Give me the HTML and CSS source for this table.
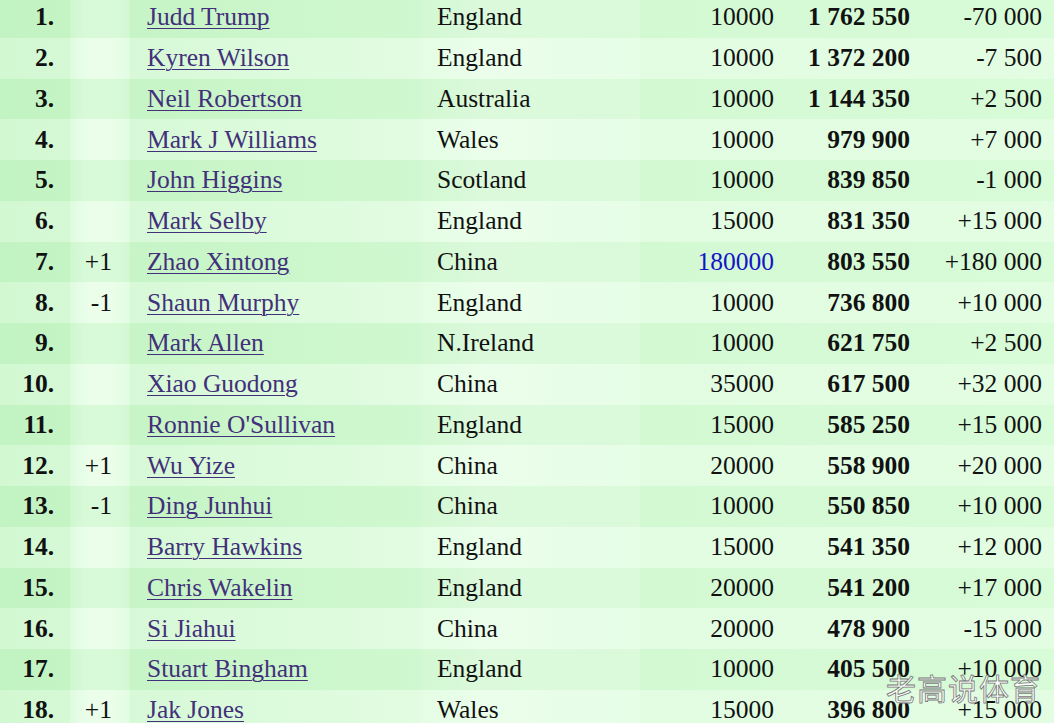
FILE: index.html
```html
<!DOCTYPE html>
<html>
<head>
<meta charset="utf-8">
<link rel="stylesheet" href="styles.css">
</head>
<body>
<div class="page">
<table class="rank">
<colgroup><col class="c-pos"><col class="c-chg"><col class="c-name"><col class="c-ctry"><col class="c-pts"><col class="c-tot"><col class="c-diff"></colgroup>
<tbody>
<tr class="odd"><td class="pos">1.</td><td class="chg"></td><td class="name"><a href="#">Judd Trump</a></td><td class="ctry">England</td><td class="pts">10000</td><td class="tot">1 762 550</td><td class="diff">-70 000</td></tr>
<tr class="even"><td class="pos">2.</td><td class="chg"></td><td class="name"><a href="#">Kyren Wilson</a></td><td class="ctry">England</td><td class="pts">10000</td><td class="tot">1 372 200</td><td class="diff">-7 500</td></tr>
<tr class="odd"><td class="pos">3.</td><td class="chg"></td><td class="name"><a href="#">Neil Robertson</a></td><td class="ctry">Australia</td><td class="pts">10000</td><td class="tot">1 144 350</td><td class="diff">+2 500</td></tr>
<tr class="even"><td class="pos">4.</td><td class="chg"></td><td class="name"><a href="#">Mark J Williams</a></td><td class="ctry">Wales</td><td class="pts">10000</td><td class="tot">979 900</td><td class="diff">+7 000</td></tr>
<tr class="odd"><td class="pos">5.</td><td class="chg"></td><td class="name"><a href="#">John Higgins</a></td><td class="ctry">Scotland</td><td class="pts">10000</td><td class="tot">839 850</td><td class="diff">-1 000</td></tr>
<tr class="even"><td class="pos">6.</td><td class="chg"></td><td class="name"><a href="#">Mark Selby</a></td><td class="ctry">England</td><td class="pts">15000</td><td class="tot">831 350</td><td class="diff">+15 000</td></tr>
<tr class="odd"><td class="pos">7.</td><td class="chg">+1</td><td class="name"><a href="#">Zhao Xintong</a></td><td class="ctry">China</td><td class="pts blue">180000</td><td class="tot">803 550</td><td class="diff">+180 000</td></tr>
<tr class="even"><td class="pos">8.</td><td class="chg">-1</td><td class="name"><a href="#">Shaun Murphy</a></td><td class="ctry">England</td><td class="pts">10000</td><td class="tot">736 800</td><td class="diff">+10 000</td></tr>
<tr class="odd"><td class="pos">9.</td><td class="chg"></td><td class="name"><a href="#">Mark Allen</a></td><td class="ctry">N.Ireland</td><td class="pts">10000</td><td class="tot">621 750</td><td class="diff">+2 500</td></tr>
<tr class="even"><td class="pos">10.</td><td class="chg"></td><td class="name"><a href="#">Xiao Guodong</a></td><td class="ctry">China</td><td class="pts">35000</td><td class="tot">617 500</td><td class="diff">+32 000</td></tr>
<tr class="odd"><td class="pos">11.</td><td class="chg"></td><td class="name"><a href="#">Ronnie O'Sullivan</a></td><td class="ctry">England</td><td class="pts">15000</td><td class="tot">585 250</td><td class="diff">+15 000</td></tr>
<tr class="even"><td class="pos">12.</td><td class="chg">+1</td><td class="name"><a href="#">Wu Yize</a></td><td class="ctry">China</td><td class="pts">20000</td><td class="tot">558 900</td><td class="diff">+20 000</td></tr>
<tr class="odd"><td class="pos">13.</td><td class="chg">-1</td><td class="name"><a href="#">Ding Junhui</a></td><td class="ctry">China</td><td class="pts">10000</td><td class="tot">550 850</td><td class="diff">+10 000</td></tr>
<tr class="even"><td class="pos">14.</td><td class="chg"></td><td class="name"><a href="#">Barry Hawkins</a></td><td class="ctry">England</td><td class="pts">15000</td><td class="tot">541 350</td><td class="diff">+12 000</td></tr>
<tr class="odd"><td class="pos">15.</td><td class="chg"></td><td class="name"><a href="#">Chris Wakelin</a></td><td class="ctry">England</td><td class="pts">20000</td><td class="tot">541 200</td><td class="diff">+17 000</td></tr>
<tr class="even"><td class="pos">16.</td><td class="chg"></td><td class="name"><a href="#">Si Jiahui</a></td><td class="ctry">China</td><td class="pts">20000</td><td class="tot">478 900</td><td class="diff">-15 000</td></tr>
<tr class="odd"><td class="pos">17.</td><td class="chg"></td><td class="name"><a href="#">Stuart Bingham</a></td><td class="ctry">England</td><td class="pts">10000</td><td class="tot">405 500</td><td class="diff">+10 000</td></tr>
<tr class="even"><td class="pos">18.</td><td class="chg">+1</td><td class="name"><a href="#">Jak Jones</a></td><td class="ctry">Wales</td><td class="pts">15000</td><td class="tot">396 800</td><td class="diff">+15 000</td></tr>
</tbody>
</table>
<div class="watermark">老高说体育</div>
</div>
</body>
</html>
```

FILE: styles.css
```css
html, body {
  margin: 0;
  padding: 0;
  background: #d8f8d8;
  overflow: hidden;
}
.page {
  position: relative;
  width: 1054px;
  height: 723px;
  overflow: hidden;
  font-family: "Liberation Serif", "Times New Roman", serif;
  font-size: 25.5px;
  color: #111;
}
.rank {
  border-collapse: collapse;
  border-spacing: 0;
  table-layout: fixed;
  width: 1054px;
  margin-top: -3px;
}
.c-pos { width: 70px; }
.c-chg { width: 60px; }
.c-name { width: 290px; }
.c-ctry { width: 220px; }
.c-pts { width: 150px; }
.c-tot { width: 136px; }
.c-diff { width: 128px; }
.rank td {
  height: 40.75px;
  padding: 0;
  line-height: 28px;
  vertical-align: middle;
  white-space: nowrap;
}
.odd { background: linear-gradient(to right, #c2f3c2 0%, #d0f8d0 40%, #d8fbd8 100%); }
.even { background: linear-gradient(to right, #d2f8d2 0%, #e2fce2 40%, #e2fde2 100%); }
.odd .chg { background: linear-gradient(to right, #cff7cf, #d9fad9 30%, #d9fad9 70%, #d2f8d2); }
.even .chg { background: linear-gradient(to right, #dffbdf, #eafeea 30%, #eafeea 70%, #e2fce2); }
.odd .ctry { background: linear-gradient(to right, #d2f8d2, #dcf9dc 30%, #dafada); }
.even .ctry { background: linear-gradient(to right, #e4fde4, #ebfeeb 30%, #e6fde6); }
.pos {
  text-align: right;
  padding-right: 16px !important;
  font-weight: bold;
}
.chg {
  text-align: right;
  padding-right: 18px !important;
}
.name {
  padding-left: 17px !important;
}
.name a {
  color: #43307a;
  text-decoration: underline;
  text-underline-offset: 3px;
  text-decoration-thickness: 1px;
}
.ctry {
  padding-left: 17px !important;
}
.pts {
  text-align: right;
  padding-right: 16px !important;
}
.pts.blue { color: #1515c8; }
.tot {
  text-align: right;
  padding-right: 16px !important;
  font-weight: bold;
}
.diff {
  text-align: right;
  padding-right: 12px !important;
}
.watermark {
  position: absolute;
  left: 886px;
  top: 670px;
  font-family: "Noto Sans CJK SC", sans-serif;
  font-size: 30px;
  line-height: 34px;
  letter-spacing: 1px;
  color: rgba(255,255,255,0.9);
  -webkit-text-stroke: 0.8px #777;
}
```
